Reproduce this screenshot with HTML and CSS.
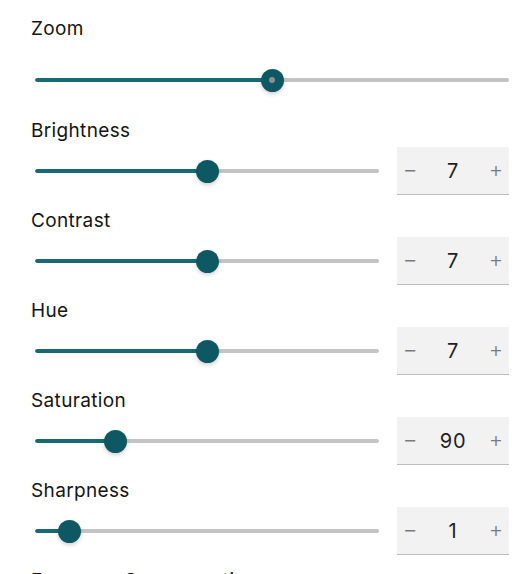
FILE: index.html
```html
<!DOCTYPE html>
<html>
<head>
<meta charset="utf-8">
<link rel="stylesheet" href="styles.css">
</head>
<body>
<div class="panel">
  <section class="control control-zoom">
    <div class="label">Zoom</div>
    <div class="row">
      <div class="slider">
        <div class="track"><div class="fill" style="width:50%"></div></div>
        <div class="thumb thumb-dot" style="left:50%"></div>
      </div>
    </div>
  </section>

  <section class="control">
    <div class="label">Brightness</div>
    <div class="row">
      <div class="slider">
        <div class="track"><div class="fill" style="width:50%"></div></div>
        <div class="thumb" style="left:50%"></div>
      </div>
      <div class="stepper"><span class="btn">−</span><span class="val">7</span><span class="btn">+</span></div>
    </div>
  </section>

  <section class="control">
    <div class="label">Contrast</div>
    <div class="row">
      <div class="slider">
        <div class="track"><div class="fill" style="width:50%"></div></div>
        <div class="thumb" style="left:50%"></div>
      </div>
      <div class="stepper"><span class="btn">−</span><span class="val">7</span><span class="btn">+</span></div>
    </div>
  </section>

  <section class="control">
    <div class="label">Hue</div>
    <div class="row">
      <div class="slider">
        <div class="track"><div class="fill" style="width:50%"></div></div>
        <div class="thumb" style="left:50%"></div>
      </div>
      <div class="stepper"><span class="btn">−</span><span class="val">7</span><span class="btn">+</span></div>
    </div>
  </section>

  <section class="control">
    <div class="label">Saturation</div>
    <div class="row">
      <div class="slider">
        <div class="track"><div class="fill" style="width:23.3%"></div></div>
        <div class="thumb" style="left:23.3%"></div>
      </div>
      <div class="stepper"><span class="btn">−</span><span class="val">90</span><span class="btn">+</span></div>
    </div>
  </section>

  <section class="control">
    <div class="label">Sharpness</div>
    <div class="row">
      <div class="slider">
        <div class="track"><div class="fill" style="width:10%"></div></div>
        <div class="thumb" style="left:10%"></div>
      </div>
      <div class="stepper"><span class="btn">−</span><span class="val">1</span><span class="btn">+</span></div>
    </div>
  </section>

  <section class="control">
    <div class="label">Exposure Compensation</div>
  </section>
</div>
</body>
</html>
```

FILE: styles.css
```css
html, body {
  margin: 0;
  padding: 0;
  background: #ffffff;
  overflow: hidden;
}

body {
  font-family: "Inter", "Noto Sans", sans-serif;
  color: #141414;
}

.panel {
  padding: 15px 14px 0 31px;
  display: flex;
  flex-direction: column;
}

.control {
  display: flex;
  flex-direction: column;
  margin-bottom: 12px;
}

.control-zoom {
  margin-bottom: 13px;
}

.label {
  font-size: 19px;
  line-height: 24px;
  padding-top: 2px;
  letter-spacing: 0.35px;
  white-space: nowrap;
}

.row {
  margin-top: 4px;
  height: 48px;
  display: flex;
  align-items: center;
  gap: 18px;
}

.control-zoom .row {
  margin-top: 15px;
}

.slider {
  position: relative;
  flex: 1;
  height: 48px;
  margin-left: 4px;
  display: flex;
  align-items: center;
}

.track {
  width: 100%;
  height: 4px;
  border-radius: 2px;
  background: #c4c4c4;
  overflow: hidden;
}

.fill {
  height: 100%;
  background: #176a74;
  border-radius: 2px;
}

.thumb {
  position: absolute;
  top: 50%;
  width: 23px;
  height: 23px;
  margin-left: -11.5px;
  margin-top: -11.5px;
  border-radius: 50%;
  background: #0d5863;
  box-shadow: 0 2px 4px rgba(0, 0, 0, 0.18);
}

.thumb-dot::after {
  content: "";
  position: absolute;
  left: 50%;
  top: 50%;
  width: 6px;
  height: 6px;
  margin: -3px 0 0 -3px;
  border-radius: 50%;
  background: #8a8f90;
}

.stepper {
  width: 112px;
  height: 48px;
  box-sizing: border-box;
  background: #f2f2f2;
  border-bottom: 1px solid #bdbdbd;
  display: flex;
  align-items: center;
  justify-content: space-between;
  padding: 0 6px 0 6px;
}

.btn {
  width: 14px;
  text-align: center;
  font-family: "DejaVu Sans", sans-serif;
  font-size: 16px;
  color: #7a7a7a;
}

.val {
  font-size: 20px;
  letter-spacing: 0.8px;
  color: #1f1f1f;
}
```
